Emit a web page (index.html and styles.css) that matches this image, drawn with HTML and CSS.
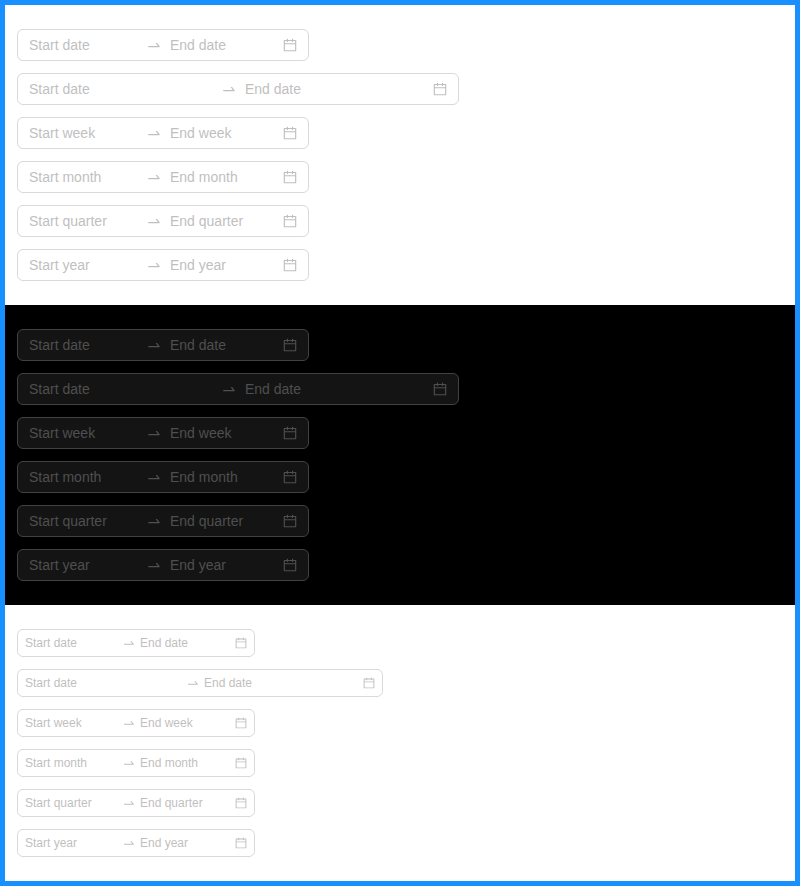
FILE: index.html
```html
<!DOCTYPE html>
<html lang="en">
<head>
<meta charset="utf-8">
<title>Range pickers</title>
<link rel="stylesheet" href="styles.css">
</head>
<body>
<svg class="defs" aria-hidden="true">
<symbol id="swap" viewBox="0 0 1024 1024"><path d="M873.1 596.2l-164-208A32 32 0 00684 376h-64.800c-6.700 0-10.400 7.700-6.300 13l144.300 183H152c-4.400 0-8 3.600-8 8v60c0 4.400 3.600 8 8 8h695.900c26.800 0 41.700-30.800 25.200-51.800z"/></symbol>
<symbol id="calendar" viewBox="64 64 896 896"><path d="M880 184H712v-64c0-4.400-3.600-8-8-8h-56c-4.400 0-8 3.600-8 8v64H384v-64c0-4.400-3.600-8-8-8h-56c-4.400 0-8 3.600-8 8v64H144c-17.700 0-32 14.300-32 32v664c0 17.700 14.300 32 32 32h736c17.700 0 32-14.300 32-32V216c0-17.700-14.300-32-32-32zm-40 656H184V460h656v380zM184 392V256h128v48c0 4.400 3.600 8 8 8h56c4.400 0 8-3.600 8-8v-48h256v48c0 4.400 3.600 8 8 8h56c4.400 0 8-3.600 8-8v-48h128v136H184z"/></symbol>
</svg>
<main id="app"></main>
<script src="script.js"></script>
</body>
</html>
```
FILE: styles.css
```css
* { box-sizing: border-box; }
body { margin: 0; background: #1890ff; font-family: "Liberation Sans", Arial, sans-serif; }
.defs { position: absolute; width: 0; height: 0; }
main { padding: 5px; }
.theme {
  display: flex; flex-direction: column; align-items: flex-start; gap: 12px;
  padding: 24px 12px;
  --bg: #fff; --border: #d9d9d9; --text: #bfbfbf; --icon: #bfbfbf;
  background: #fff; font-size: 14px; line-height: 22px;
}
.dark { background: #000; --bg: #141414; --border: #424242; --text: #4f4f4f; --icon: #4f4f4f; }
.picker {
  display: flex; align-items: center; width: 292px; height: 32px;
  padding: 0 11px; border: 1px solid var(--border); border-radius: 6px;
  background: var(--bg); color: var(--text);
}
.picker.wide { width: 442px; }
.field { flex: 1; }
.separator { display: flex; padding: 0 8px; }
.separator svg { width: 16px; height: 16px; }
.suffix { display: flex; margin-left: 4px; }
.suffix svg { width: 14px; height: 14px; }
svg { fill: var(--icon); }
.compact { font-size: 12px; line-height: 20px; }
.compact .picker { width: 238px; height: 28px; padding: 0 7px; }
.compact .picker.wide { width: 366px; }
.compact .separator { padding: 0 4px 0 6px; }
.compact .separator svg { width: 14px; height: 14px; }
.compact .suffix svg { width: 12px; height: 12px; }
```
FILE: script.js
```javascript
const rows = ["date", "date", "week", "month", "quarter", "year"];
document.getElementById("app").innerHTML = ["light", "dark", "compact"].map(theme =>
  `<section class="theme ${theme}">` + rows.map((unit, i) =>
    `<div class="picker${i === 1 ? " wide" : ""}"><span class="field">Start ${unit}</span><span class="separator"><svg><use href="#swap"/></svg></span><span class="field">End ${unit}</span><span class="suffix"><svg><use href="#calendar"/></svg></span></div>`
  ).join("") + `</section>`).join("");
```
